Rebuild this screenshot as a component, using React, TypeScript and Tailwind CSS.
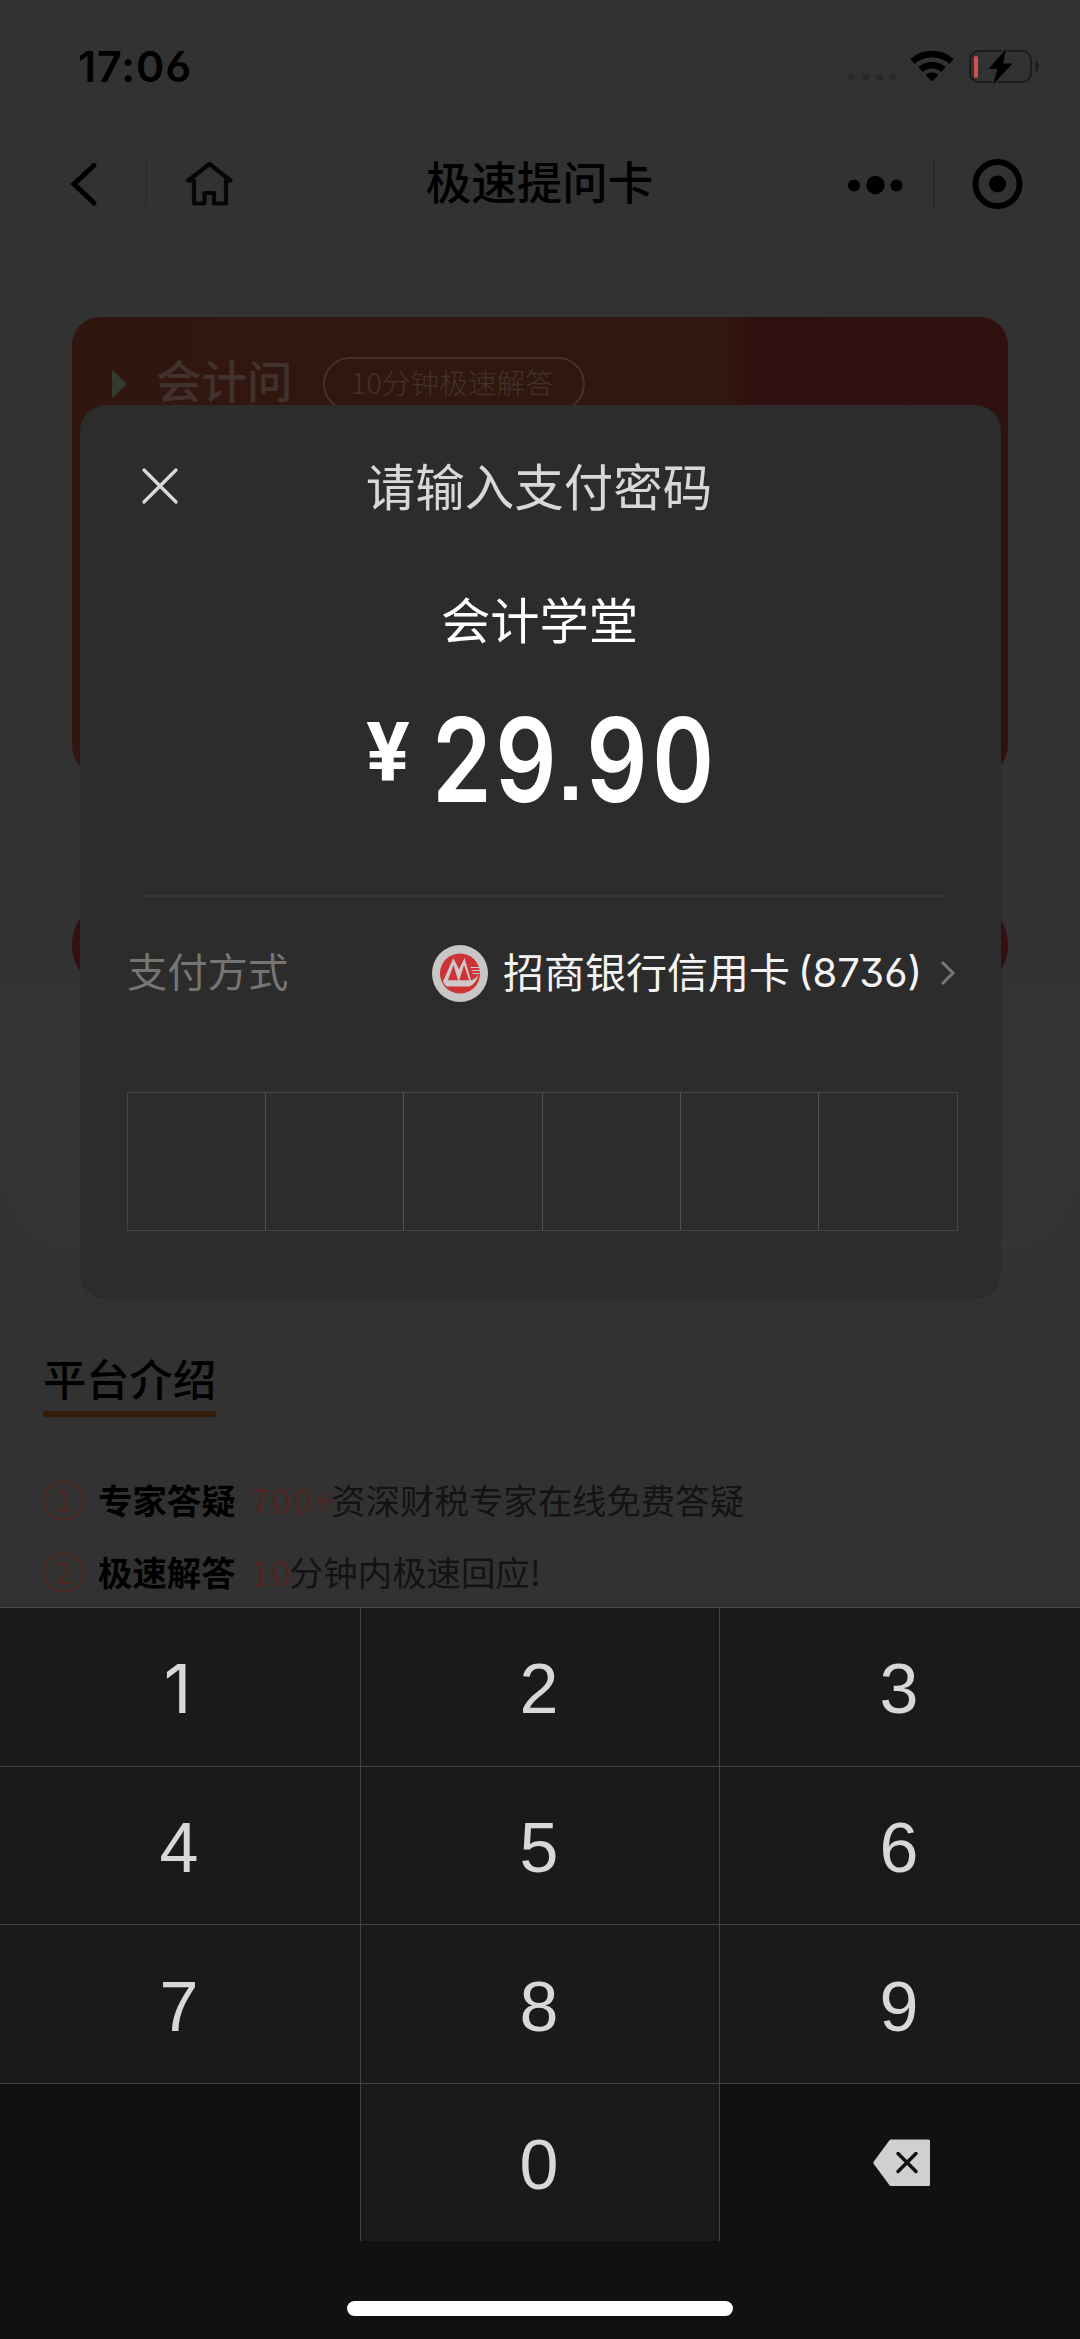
import React from "react";

const cjk = "font-['Inter','Noto_Sans_CJK_SC',sans-serif]";

function StatusBar() {
  return (
    <div className="flex h-[132px] items-start justify-between pl-[78px] pr-[40px] pt-[46px] text-black">
      <div className="-mt-px text-[43px] leading-[42px] font-semibold tracking-[0.9px] font-['Inter'] [font-feature-settings:'ss01','cv03']">17:06</div>
      <svg width="194" height="42" viewBox="846 46 194 42" fill="none">
        <g fill="#292929">
          <rect x="848" y="74" width="7" height="6" rx="2" />
          <rect x="862" y="74" width="7" height="6" rx="2" />
          <rect x="876" y="74" width="7" height="6" rx="2" />
          <rect x="889" y="74" width="7" height="6" rx="2" />
        </g>
        <g stroke="#000" strokeWidth="6.5">
          <path d="M912.5 61.5a29 29 0 0 1 39 0" />
          <path d="M920.500 69.500a17.500 17.500 0 0 1 23 0" />
        </g>
        <path d="M932 81.500l-6.500-6.500a10 10 0 0 1 13 0z" fill="#000" />
        <rect x="970" y="51" width="61" height="31" rx="9" stroke="#1c1c1c" strokeWidth="2" />
        <path d="M1035.500 60.500c4.500 2 4.500 10 0 12z" fill="#1c1c1c" />
        <rect x="974" y="56" width="4" height="22" rx="2" fill="#d0524d" />
        <path d="M1006 49l-17.500 20h9l-4.500 15.500 19.500-21h-9.500z" fill="#000" stroke="#323232" strokeWidth="3" paintOrder="stroke" />
      </svg>
    </div>
  );
}

function NavBar() {
  return (
    <div className="flex h-[110px] items-start pt-[18px] text-black">
      <svg width="200" height="70" viewBox="60 150 200 70" fill="none" className="ml-[60px] shrink-0" stroke="#000">
        <path d="M94 165.500L74 184l20 19" strokeWidth="5" strokeLinecap="round" strokeLinejoin="miter" />
        <path d="M146.500 160v47" stroke="#2d2d2d" strokeWidth="2" />
        <path d="M188 180.500l21.500-16.500 21 16.500h-4.500v23h-12v-10.500h-9.500v10.500h-10.500v-23z" stroke="#0a0606" strokeWidth="4.200" strokeLinejoin="round" />
      </svg>
      <div className={`w-[560px] pr-px text-center text-[45.500px] leading-[68px] font-medium ${cjk}`}>极速提问卡</div>
      <svg width="200" height="70" viewBox="830 150 200 70" fill="none" className="ml-[10px] shrink-0">
        <g fill="#000">
          <circle cx="854" cy="185.500" r="6" />
          <circle cx="875.500" cy="185" r="9.200" />
          <circle cx="896.500" cy="185.500" r="6" />
          <circle cx="997.500" cy="184" r="8.500" />
        </g>
        <path d="M934 160v48" stroke="#2a2a2a" strokeWidth="2" />
        <circle cx="997.500" cy="184" r="22" stroke="#000" strokeWidth="6" />
      </svg>
    </div>
  );
}

function Banner() {
  return (
    <div className="mx-[72px] mt-[75px] h-[457px] overflow-hidden rounded-[28px] bg-[linear-gradient(90deg,#31160f_0%,#30180f_40%,#30180f_70%,#300f0f_73%,#2f1210_90%,#2f1110_100%)]">
      <div className="flex items-start pt-[36px]">
        <div className="ml-[40px] mt-[17px] h-0 w-0 border-y-[14px] border-l-[15px] border-y-transparent border-l-[#343b31]" />
        <div className={`ml-[29px] text-[45.500px] leading-[60px] font-medium text-[#41322d] ${cjk}`}>会计问</div>
        <div className="ml-[30px] mt-[4px] flex h-[54px] w-[262px] items-center justify-center rounded-full border-2 border-[#43322d] pb-[4px] pr-[2px]">
          <span className="text-[28.700px] leading-none text-[#42322d] font-['Noto_Sans_CJK_SC',sans-serif] font-light">10分钟极速解答</span>
        </div>
      </div>
    </div>
  );
}

function IntroItem({ no, title, accent, text }: { no: string; title: string; accent: string; text: string }) {
  return (
    <div className="flex h-[72px] items-center text-[34.400px] leading-[50px] font-['Noto_Sans_CJK_SC',sans-serif]">
      <span className="flex h-[41px] w-[41px] items-center justify-center rounded-full border-[2.500px] border-[#4d261f] pb-[2px] text-[31px] text-[#4d261f]">{no}</span>
      <span className="ml-[14px] pb-[2px] font-bold text-black">{title}</span>
      <span className="-mr-[4px] ml-[15px] pb-[2px] tracking-[2.100px] text-[#4d261f]">{accent}</span>
      <span className="pb-[2px] text-[#131313]">{text}</span>
    </div>
  );
}

function BankLogo() {
  return (
    <svg width="56" height="57" viewBox="0 0 56 57" className="shrink-0">
      <ellipse cx="28" cy="28.500" rx="28" ry="28.500" fill="#c9c6c6" />
      <circle cx="28" cy="28.500" r="20" fill="#cb3335" />
      <path d="M21.300 13L11 36.500q2 4.500 4.500 5H37q8-3 9.500-12.500-2 4.500-7.500 6.500L32.500 13 27 24.500z" fill="#cfc8c8" />
      <path d="M21.500 20l4.500 15.300h-10zM32 20l5.200 15.300h-9.900z" fill="#cb3335" />
      <path d="M38.500 22.500h10M39.500 25.500h9M40.500 28.500h7" stroke="#cfc8c8" strokeWidth="1.200" />
    </svg>
  );
}

function Amount() {
  return (
    <div className="flex items-start text-[117px] leading-[140px] font-semibold font-['Inter']">
      <span className="flex w-[64px] scale-x-[0.82] justify-center">2</span>
      <span className="flex w-[64px] scale-x-[0.82] justify-center">9</span>
      <span className="flex w-[25px] justify-center text-[90px] leading-[158px] font-bold font-['Liberation_Sans']">.</span>
      <span className="flex w-[68px] scale-x-[0.82] justify-center">9</span>
      <span className="flex w-[64px] scale-x-[0.8] justify-center">0</span>
    </div>
  );
}

function PayDialog() {
  return (
    <div className={`absolute left-[80px] top-[405px] flex h-[894px] w-[921px] flex-col rounded-[26px] bg-[#2c2c2c] ${cjk}`}>
      <div className="grid h-[164px] grid-cols-[110px_1fr_110px] items-center">
        <svg width="38" height="38" viewBox="0 0 38 38" className="-mt-[2px] ml-[61px]" stroke="#dadada" strokeWidth="3.300" strokeLinecap="round">
          <path d="M3 3l32 32M35 3L3 35" />
        </svg>
        <div className="pr-[3px] pt-px text-center text-[49.500px] leading-[60px] text-[#d8d8d8]">请输入支付密码</div>
      </div>
      <div className="mt-[22px] pr-[2px] text-center text-[49.300px] leading-[60px] text-white">会计学堂</div>
      <div className="mt-[39px] flex h-[140px] pl-[285px] text-white">
        <span className="mr-[19px] mt-[27px] flex w-[46px] justify-center text-[81px] leading-[72px] font-bold font-['Roboto']">¥</span>
        <Amount />
      </div>
      <div className="ml-[63px] mr-[52px] mt-[65px] h-[2px] shrink-0 bg-[#343434]" />
      <div className="mt-[36px] flex h-[80px] items-center pl-[47px] pr-[44px]">
        <span className="text-[40.300px] leading-[60px] text-[#757575]">支付方式</span>
        <div className="ml-auto flex items-center">
          <BankLogo />
          <span className="ml-[15px] whitespace-nowrap text-[41px] leading-[60px] text-[#f4f4f4]">招商银行信用卡</span>
          <span className="ml-[8px] text-[40px] leading-[60px] text-[#f4f4f4] [font-feature-settings:'ss01','cv03']">(8736)</span>
          <svg width="18" height="28" viewBox="0 0 18 28" className="ml-[17px]" fill="none" stroke="#777" strokeWidth="3">
            <path d="M3 3l11 11L3 25" />
          </svg>
        </div>
      </div>
      <div className="ml-[47px] mt-[79px] grid h-[139px] w-[831px] grid-cols-6 border border-[#464646]">
        {[0, 1, 2, 3, 4, 5].map((i) => (
          <div key={i} className="border-r border-[#525252] last:border-r-0" />
        ))}
      </div>
    </div>
  );
}

function Key({ label }: { label: string }) {
  return (
    <div className="flex items-center justify-center bg-[#1a1a1a] pr-[2px] pt-[5px] text-[70px] leading-none text-[#d8d8d8] font-['Liberation_Sans']">
      {label === "1" ? <span className="pb-[2px] pr-[3px] text-[68px] font-['Inter']">1</span> : label}
    </div>
  );
}

function Keypad() {
  return (
    <div className="absolute inset-x-0 bottom-0 h-[732px] bg-[#111111]">
      <div className="h-px bg-[#4a4a4a]" />
      <div className="grid h-[475px] grid-cols-[360px_358px_360px] grid-rows-3 gap-px bg-[#444444]">
        {["1", "2", "3", "4", "5", "6", "7", "8", "9"].map((n) => (
          <Key key={n} label={n} />
        ))}
      </div>
      <div className="h-px bg-[#444444]" />
      <div className="grid h-[157px] grid-cols-[360px_360px_360px]">
        <div />
        <div className="grid border-x border-[#444444]">
          <Key label="0" />
        </div>
        <div className="flex items-center justify-center pl-[4px]">
          <svg width="58" height="48" viewBox="0 0 58 48">
            <path d="M18 .5h37.500a1.500 1.500 0 0 1 1.500 1.500v43.500a1.500 1.500 0 0 1-1.500 1.500H18q-1 0-1.500-.8L.8 25q-.8-1.300 0-2.500L16.500 1.300q.5-.8 1.500-.8z" fill="#d0d0d0" />
            <path d="M25 14.500l18 18M43 14.500l-18 18" stroke="#111" strokeWidth="3.500" strokeLinecap="round" />
          </svg>
        </div>
      </div>
      <div className="mx-auto mt-[60px] h-[15px] w-[386px] rounded-full bg-white" />
    </div>
  );
}

export default function App() {
  return (
    <div className="relative h-[2339px] w-[1080px] overflow-hidden bg-[#323232]">
      <div className="h-[1250px] rounded-b-[80px] bg-[linear-gradient(180deg,#323232_0%,#323232_60%,#343434_100%)]">
        <StatusBar />
        <NavBar />
        <Banner />
        <div className="mx-[72px] mt-[122px] h-[98px] rounded-full bg-[#340f13]" />
      </div>
      <div className="px-[43px] pt-[94px]">
        <h2 className={`inline-block border-b-[6px] border-[#331d08] pt-[6px] text-[43.300px] leading-[61px] font-medium text-black ${cjk}`}>平台介绍</h2>
        <div className="mt-[47px]">
          <IntroItem no="1" title="专家答疑" accent="700+" text="资深财税专家在线免费答疑" />
          <IntroItem no="2" title="极速解答" accent="10" text="分钟内极速回应!" />
        </div>
      </div>
      <PayDialog />
      <Keypad />
    </div>
  );
}
